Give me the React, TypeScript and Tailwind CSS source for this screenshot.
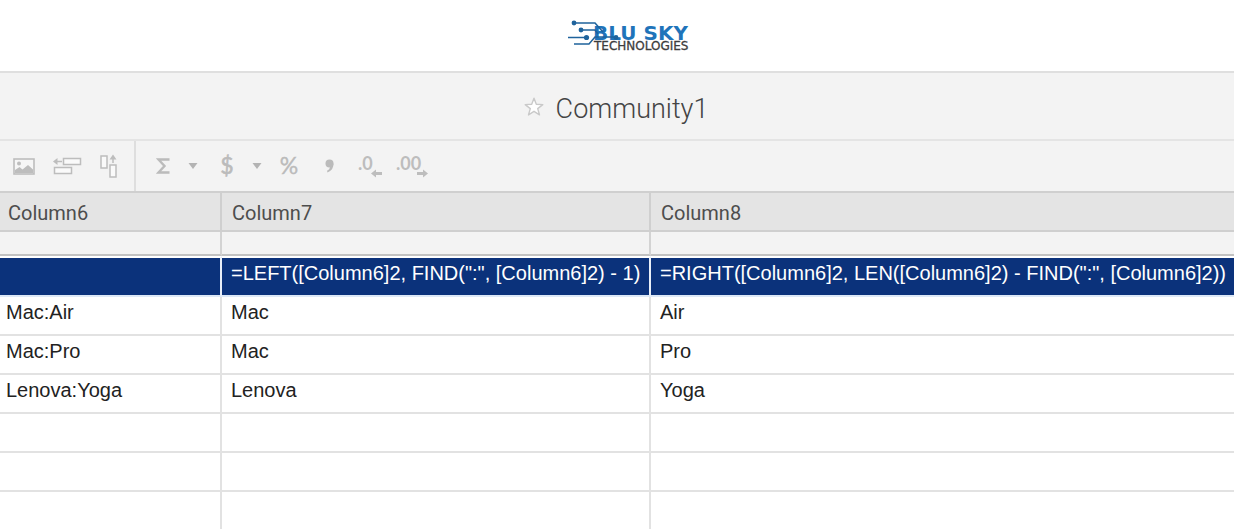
import React from 'react';

interface Row {
  id: number;
  cells: [string, string, string];
  selected?: boolean;
}

const COLUMNS = ['Column6', 'Column7', 'Column8'];

const ROWS: Row[] = [
  {
    id: 1,
    selected: true,
    cells: [
      '',
      '=LEFT([Column6]2, FIND(":", [Column6]2) - 1)',
      '=RIGHT([Column6]2, LEN([Column6]2) - FIND(":", [Column6]2))',
    ],
  },
  { id: 2, cells: ['Mac:Air', 'Mac', 'Air'] },
  { id: 3, cells: ['Mac:Pro', 'Mac', 'Pro'] },
  { id: 4, cells: ['Lenova:Yoga', 'Lenova', 'Yoga'] },
  { id: 5, cells: ['', '', ''] },
  { id: 6, cells: ['', '', ''] },
  { id: 7, cells: ['', '', ''] },
];

const Logo = () => (
  <svg width="128" height="40" viewBox="0 0 128 40" role="img" aria-label="Blu Sky Technologies">
    <text x="28" y="24" fontSize="20" fontWeight="700" fill="#1f74ba" fontFamily='"DejaVu Sans", sans-serif'>
      BLU SKY
    </text>
    <text x="29" y="34" fontSize="12" fill="#3d3d3d" stroke="#3d3d3d" strokeWidth="0.3" fontFamily='"DejaVu Sans", sans-serif'>
      TECHNOLOGIES
    </text>
    <g fill="none" stroke="#1f639c" strokeWidth="1.5">
      <path d="M9 7h21l8 9" />
      <path d="M16 14h14l3 4" />
      <path d="M3 21.500h20" />
      <path d="M9 28h15l6-7h20" />
    </g>
    <g fill="#1f639c">
      <circle cx="9" cy="7" r="2.400" />
      <circle cx="16" cy="14" r="2.400" />
      <circle cx="21.500" cy="21.500" r="2.600" />
      <circle cx="51" cy="21.500" r="2.400" />
    </g>
  </svg>
);

const StarIcon = () => (
  <svg width="20" height="20" viewBox="0 0 20 20" fill="#fff" stroke="#c9c9c9" strokeWidth="1.4" strokeLinejoin="round">
    <path d="M10 1.200l2.300 6.100 6.500.300-5.100 4 1.800 6.300L10 14.300l-5.500 3.600 1.800-6.300-5.100-4 6.500-.300z" />
  </svg>
);

const ImageIcon = () => (
  <svg width="22" height="17" viewBox="0 0 22 17">
    <rect x="1" y="1" width="20" height="15" fill="#f6f6f6" stroke="#bdbdbd" strokeWidth="1.600" />
    <circle cx="6" cy="5.500" r="2" fill="#bdbdbd" />
    <path d="M2 15v-3l4.500-3 3 2.500L15 7l5 4.500V15z" fill="#bdbdbd" />
  </svg>
);

const InsertRowIcon = () => (
  <svg width="29" height="18" viewBox="0 0 29 18" fill="#fafafa" stroke="#bdbdbd" strokeWidth="1.500">
    <rect x="10.500" y="1.500" width="17" height="6" />
    <rect x="1.500" y="10.500" width="17" height="6" />
    <path d="M9 4.500H3" />
    <path d="M4.500 1v7L0 4.500z" fill="#bdbdbd" stroke="none" />
  </svg>
);

const InsertColumnIcon = () => (
  <svg width="17" height="24" viewBox="0 0 17 24" fill="#fafafa" stroke="#bdbdbd" strokeWidth="1.500">
    <rect x="1" y="2" width="6" height="12" />
    <rect x="10" y="11" width="6" height="12" />
    <path d="M13 9V3" />
    <path d="M9.500 5.500h7L13 .500z" fill="#bdbdbd" stroke="none" />
  </svg>
);

const SigmaIcon = () => (
  <svg width="14" height="16" viewBox="0 0 14 16" fill="none" stroke="#bbb" strokeWidth="2.400">
    <path d="M13.500 1.500H2.500l6 6.500-6 6.500h11" strokeLinejoin="miter" />
  </svg>
);

const DollarIcon = () => (
  <svg width="14" height="32" viewBox="0 0 14 32" fill="#bbb" stroke="#bbb" strokeWidth="0.6">
    <text x="7" y="24" textAnchor="middle" fontSize="23" fontFamily="Lato, sans-serif">$</text>
  </svg>
);

const PercentIcon = () => (
  <svg width="22" height="32" viewBox="0 0 22 32" fill="#bbb" stroke="#bbb" strokeWidth="0.4">
    <text x="11" y="24" textAnchor="middle" fontSize="23" fontFamily="Lato, sans-serif">%</text>
  </svg>
);

const CaretIcon = () => (
  <svg width="10" height="6" viewBox="0 0 10 6" fill="#b3b3b3">
    <path d="M.500 0h9L5 6z" />
  </svg>
);

const CommaIcon = () => (
  <svg width="10" height="14" viewBox="0 0 10 14">
    <circle cx="4.500" cy="4.500" r="4" fill="#bbb" />
    <path d="M8.500 4.500c0 4.500-2 7.500-6 9l-.500-1.800C4 10.800 5 9.500 5 7z" fill="#bbb" />
  </svg>
);

const DecreaseDecimalIcon = () => (
  <svg width="26" height="28" viewBox="0 0 26 28" fill="#bdbdbd">
    <text x="0" y="18" fontSize="18" fontWeight="700" fontFamily="Lato, sans-serif">.0</text>
    <path d="M13 21.500l5-4v2.500h6v3h-6v2.500z" />
  </svg>
);

const IncreaseDecimalIcon = () => (
  <svg width="34" height="28" viewBox="0 0 34 28" fill="#bdbdbd">
    <text x="1" y="18" fontSize="18" fontWeight="700" fontFamily="Lato, sans-serif">.00</text>
    <path d="M33 21.500l-5-4v2.500h-6v3h6v2.500z" />
  </svg>
);

interface ToolButtonProps {
  label: string;
  className?: string;
  children: React.ReactNode;
}

const ToolButton: React.FC<ToolButtonProps> = ({ label, className = '', children }) => (
  <button type="button" aria-label={label} className={`flex items-center justify-center ${className}`}>
    {children}
  </button>
);

const Toolbar = () => (
  <div className="flex h-[50px] items-stretch bg-[#f3f3f3]">
    <div className="flex items-center gap-[18px] border-r-2 border-[#dedede] pl-[13px] pr-[17px]">
      <ToolButton label="Insert image"><ImageIcon /></ToolButton>
      <ToolButton label="Insert row"><InsertRowIcon /></ToolButton>
      <ToolButton label="Insert column"><InsertColumnIcon /></ToolButton>
    </div>
    <div className="flex items-center gap-[22px] pl-5">
      <ToolButton label="Sum" className="gap-[18px]">
        <SigmaIcon />
        <CaretIcon />
      </ToolButton>
      <ToolButton label="Currency format" className="gap-[18px]">
        <DollarIcon />
        <CaretIcon />
      </ToolButton>
    </div>
    <div className="flex items-center pl-1.5">
      <ToolButton label="Percent format" className="w-[41px]"><PercentIcon /></ToolButton>
      <ToolButton label="Thousands format" className="w-[41px]"><CommaIcon /></ToolButton>
      <ToolButton label="Decrease decimal" className="w-[41px]"><DecreaseDecimalIcon /></ToolButton>
      <ToolButton label="Increase decimal" className="w-[41px]"><IncreaseDecimalIcon /></ToolButton>
    </div>
  </div>
);

const Sheet = () => (
  <table className="w-full table-fixed border-separate border-spacing-0 text-left text-[20px] leading-6">
    <colgroup>
      <col className="w-[222px]" />
      <col className="w-[429px]" />
      <col />
    </colgroup>
    <thead>
      <tr className="h-[41px] bg-[#e4e4e4] font-[Roboto,sans-serif] text-[#4d4d4d]">
        {COLUMNS.map((column, index) => (
          <th
            key={column}
            scope="col"
            className={`border-y-2 border-r-2 border-[#cfcfcf] pt-0.5 pb-0 font-normal last:border-r-0 ${index === 0 ? 'pl-2' : 'pl-2.5'}`}
          >
            {column}
          </th>
        ))}
      </tr>
      {/* Spacer strip between the header and the grid */}
      <tr className="h-6 bg-[#f3f3f3]">
        {COLUMNS.map((column) => (
          <td key={column} className="border-b-2 border-r-2 border-b-[#c2c2c2] border-r-[#d3d3d3] p-0 last:border-r-0" />
        ))}
      </tr>
    </thead>
    <tbody className="font-['Liberation_Sans',Arial,sans-serif]">
      {ROWS.map((row) => (
        <tr key={row.id} className={`group ${row.selected ? 'h-[41px] text-white' : 'h-[39px] text-[#222] last:h-[37px]'}`}>
          {row.cells.map((cell, index) => (
            <td
              key={COLUMNS[index]}
              className={`whitespace-nowrap border-r-2 border-b-2 pt-[3px] pr-0 pb-0 align-top last:border-r-0 group-last:border-b-0 ${
                row.selected
                  ? 'border-t-2 border-b-[#dce8f7] border-r-[#e8eef8] border-t-white bg-[#0b327b]'
                  : 'border-[#e2e2e2]'
              } ${index === 0 ? 'pl-1.5' : 'pl-[9px]'}`}
            >
              {cell}
            </td>
          ))}
        </tr>
      ))}
    </tbody>
  </table>
);

export default function App() {
  return (
    <div className="w-full overflow-hidden bg-white">
      <header className="flex h-[73px] items-center justify-center border-b-2 border-[#dfdfdf] pl-6">
        <Logo />
      </header>
      <div className="flex h-[68px] items-center justify-center gap-3 border-b-2 border-[#e4e4e4] bg-[#f3f3f3] pt-0.5 pr-0.5">
        <button type="button" aria-label="Favorite"><StarIcon /></button>
        <h1 className="pt-1 font-[Roboto,sans-serif] text-[27px] font-light leading-8 text-[#444]">Community1</h1>
      </div>
      <Toolbar />
      <Sheet />
    </div>
  );
}
